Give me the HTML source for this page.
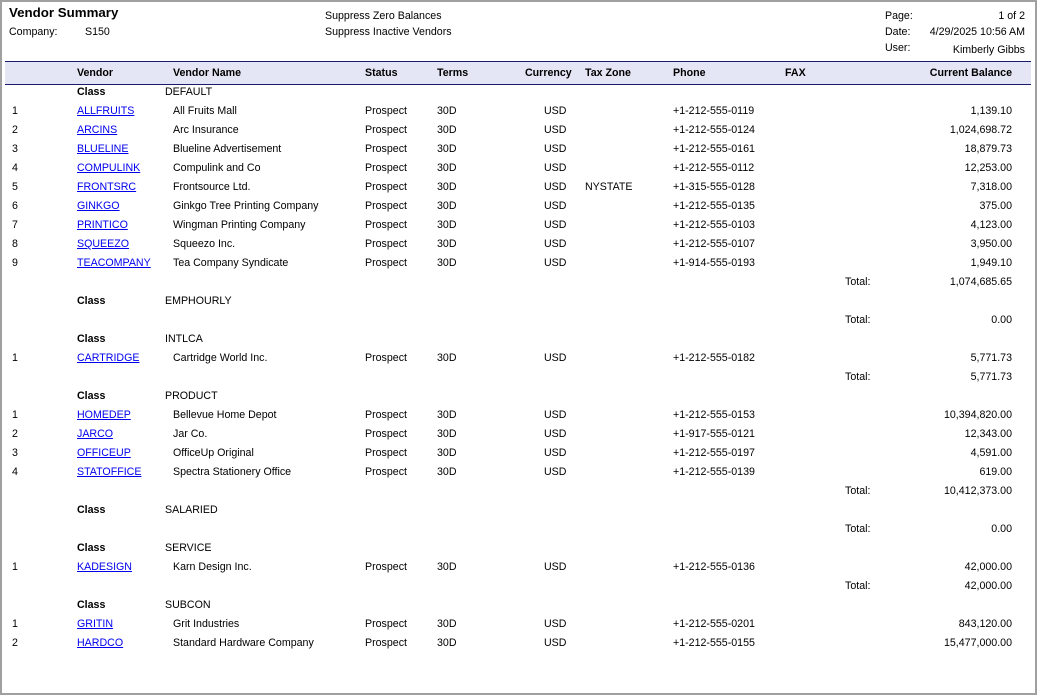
<!DOCTYPE html>
<html><head><meta charset="utf-8"><style>
body{margin:0;width:1037px;height:695px;position:relative;background:#fff;font-family:"Liberation Sans",Arial,sans-serif;font-size:10.65px;color:#000;overflow:hidden}
.frame{position:absolute;left:0;top:0;width:1033px;height:691px;border:2px solid #a0a0a0}
.t{position:absolute;white-space:nowrap;line-height:14px;height:14px}
.r{text-align:right}
a{color:#00e;text-decoration:underline}
.b{font-weight:bold}
.band{position:absolute;left:5px;top:61px;width:1026px;height:22px;background:#e4e6f6;border-top:1px solid #1a1a6e;border-bottom:1px solid #1a1a6e}
.row{position:absolute;left:0;width:1037px;height:14px}
.row span{position:absolute;white-space:nowrap;line-height:14px}
.c0{left:12px}.c1{left:77px}.c2{left:173px}.c3{left:365px}.c4{left:437px}.c5{left:544px}.c6{left:585px}.c7{left:673px}.c9{right:25px}
.cl{left:165px}.tl{left:845px}
</style></head><body>
<div class="frame"></div>
<div class="t b" style="left:9px;top:5px;font-size:13.3px;line-height:16px">Vendor Summary</div>
<div class="t" style="left:9px;top:25px">Company:</div>
<div class="t" style="left:85px;top:25px">S150</div>
<div class="t" style="left:325px;top:9px">Suppress Zero Balances</div>
<div class="t" style="left:325px;top:25px">Suppress Inactive Vendors</div>
<div class="t" style="left:885px;top:9px">Page:</div>
<div class="t r" style="right:12px;top:9px">1 of 2</div>
<div class="t" style="left:885px;top:25px">Date:</div>
<div class="t r" style="right:12px;top:25px">4/29/2025 10:56 AM</div>
<div class="t" style="left:885px;top:41px">User:</div>
<div class="t r" style="right:12px;top:43px">Kimberly Gibbs</div>
<div class="band"></div>
<div class="row b" style="top:66px"><span class="c1">Vendor</span><span class="c2">Vendor Name</span><span class="c3">Status</span><span class="c4">Terms</span><span style="left:525px">Currency</span><span class="c6">Tax Zone</span><span class="c7">Phone</span><span style="left:785px">FAX</span><span class="c9">Current Balance</span></div>

<div class="row" style="top:85px"><span class="c1 b">Class</span><span class="cl">DEFAULT</span></div>
<div class="row" style="top:104px"><span class="c0">1</span><span class="c1"><a>ALLFRUITS</a></span><span class="c2">All Fruits Mall</span><span class="c3">Prospect</span><span class="c4">30D</span><span class="c5">USD</span><span class="c7">+1-212-555-0119</span><span class="c9">1,139.10</span></div>
<div class="row" style="top:123px"><span class="c0">2</span><span class="c1"><a>ARCINS</a></span><span class="c2">Arc Insurance</span><span class="c3">Prospect</span><span class="c4">30D</span><span class="c5">USD</span><span class="c7">+1-212-555-0124</span><span class="c9">1,024,698.72</span></div>
<div class="row" style="top:142px"><span class="c0">3</span><span class="c1"><a>BLUELINE</a></span><span class="c2">Blueline Advertisement</span><span class="c3">Prospect</span><span class="c4">30D</span><span class="c5">USD</span><span class="c7">+1-212-555-0161</span><span class="c9">18,879.73</span></div>
<div class="row" style="top:161px"><span class="c0">4</span><span class="c1"><a>COMPULINK</a></span><span class="c2">Compulink and Co</span><span class="c3">Prospect</span><span class="c4">30D</span><span class="c5">USD</span><span class="c7">+1-212-555-0112</span><span class="c9">12,253.00</span></div>
<div class="row" style="top:180px"><span class="c0">5</span><span class="c1"><a>FRONTSRC</a></span><span class="c2">Frontsource Ltd.</span><span class="c3">Prospect</span><span class="c4">30D</span><span class="c5">USD</span><span class="c6">NYSTATE</span><span class="c7">+1-315-555-0128</span><span class="c9">7,318.00</span></div>
<div class="row" style="top:199px"><span class="c0">6</span><span class="c1"><a>GINKGO</a></span><span class="c2">Ginkgo Tree Printing Company</span><span class="c3">Prospect</span><span class="c4">30D</span><span class="c5">USD</span><span class="c7">+1-212-555-0135</span><span class="c9">375.00</span></div>
<div class="row" style="top:218px"><span class="c0">7</span><span class="c1"><a>PRINTICO</a></span><span class="c2">Wingman Printing Company</span><span class="c3">Prospect</span><span class="c4">30D</span><span class="c5">USD</span><span class="c7">+1-212-555-0103</span><span class="c9">4,123.00</span></div>
<div class="row" style="top:237px"><span class="c0">8</span><span class="c1"><a>SQUEEZO</a></span><span class="c2">Squeezo Inc.</span><span class="c3">Prospect</span><span class="c4">30D</span><span class="c5">USD</span><span class="c7">+1-212-555-0107</span><span class="c9">3,950.00</span></div>
<div class="row" style="top:256px"><span class="c0">9</span><span class="c1"><a>TEACOMPANY</a></span><span class="c2">Tea Company Syndicate</span><span class="c3">Prospect</span><span class="c4">30D</span><span class="c5">USD</span><span class="c7">+1-914-555-0193</span><span class="c9">1,949.10</span></div>
<div class="row" style="top:275px"><span class="tl">Total:</span><span class="c9">1,074,685.65</span></div>

<div class="row" style="top:294px"><span class="c1 b">Class</span><span class="cl">EMPHOURLY</span></div>
<div class="row" style="top:313px"><span class="tl">Total:</span><span class="c9">0.00</span></div>

<div class="row" style="top:332px"><span class="c1 b">Class</span><span class="cl">INTLCA</span></div>
<div class="row" style="top:351px"><span class="c0">1</span><span class="c1"><a>CARTRIDGE</a></span><span class="c2">Cartridge World Inc.</span><span class="c3">Prospect</span><span class="c4">30D</span><span class="c5">USD</span><span class="c7">+1-212-555-0182</span><span class="c9">5,771.73</span></div>
<div class="row" style="top:370px"><span class="tl">Total:</span><span class="c9">5,771.73</span></div>

<div class="row" style="top:389px"><span class="c1 b">Class</span><span class="cl">PRODUCT</span></div>
<div class="row" style="top:408px"><span class="c0">1</span><span class="c1"><a>HOMEDEP</a></span><span class="c2">Bellevue Home Depot</span><span class="c3">Prospect</span><span class="c4">30D</span><span class="c5">USD</span><span class="c7">+1-212-555-0153</span><span class="c9">10,394,820.00</span></div>
<div class="row" style="top:427px"><span class="c0">2</span><span class="c1"><a>JARCO</a></span><span class="c2">Jar Co.</span><span class="c3">Prospect</span><span class="c4">30D</span><span class="c5">USD</span><span class="c7">+1-917-555-0121</span><span class="c9">12,343.00</span></div>
<div class="row" style="top:446px"><span class="c0">3</span><span class="c1"><a>OFFICEUP</a></span><span class="c2">OfficeUp Original</span><span class="c3">Prospect</span><span class="c4">30D</span><span class="c5">USD</span><span class="c7">+1-212-555-0197</span><span class="c9">4,591.00</span></div>
<div class="row" style="top:465px"><span class="c0">4</span><span class="c1"><a>STATOFFICE</a></span><span class="c2">Spectra Stationery Office</span><span class="c3">Prospect</span><span class="c4">30D</span><span class="c5">USD</span><span class="c7">+1-212-555-0139</span><span class="c9">619.00</span></div>
<div class="row" style="top:484px"><span class="tl">Total:</span><span class="c9">10,412,373.00</span></div>

<div class="row" style="top:503px"><span class="c1 b">Class</span><span class="cl">SALARIED</span></div>
<div class="row" style="top:522px"><span class="tl">Total:</span><span class="c9">0.00</span></div>

<div class="row" style="top:541px"><span class="c1 b">Class</span><span class="cl">SERVICE</span></div>
<div class="row" style="top:560px"><span class="c0">1</span><span class="c1"><a>KADESIGN</a></span><span class="c2">Karn Design Inc.</span><span class="c3">Prospect</span><span class="c4">30D</span><span class="c5">USD</span><span class="c7">+1-212-555-0136</span><span class="c9">42,000.00</span></div>
<div class="row" style="top:579px"><span class="tl">Total:</span><span class="c9">42,000.00</span></div>

<div class="row" style="top:598px"><span class="c1 b">Class</span><span class="cl">SUBCON</span></div>
<div class="row" style="top:617px"><span class="c0">1</span><span class="c1"><a>GRITIN</a></span><span class="c2">Grit Industries</span><span class="c3">Prospect</span><span class="c4">30D</span><span class="c5">USD</span><span class="c7">+1-212-555-0201</span><span class="c9">843,120.00</span></div>
<div class="row" style="top:636px"><span class="c0">2</span><span class="c1"><a>HARDCO</a></span><span class="c2">Standard Hardware Company</span><span class="c3">Prospect</span><span class="c4">30D</span><span class="c5">USD</span><span class="c7">+1-212-555-0155</span><span class="c9">15,477,000.00</span></div>
</body></html>
